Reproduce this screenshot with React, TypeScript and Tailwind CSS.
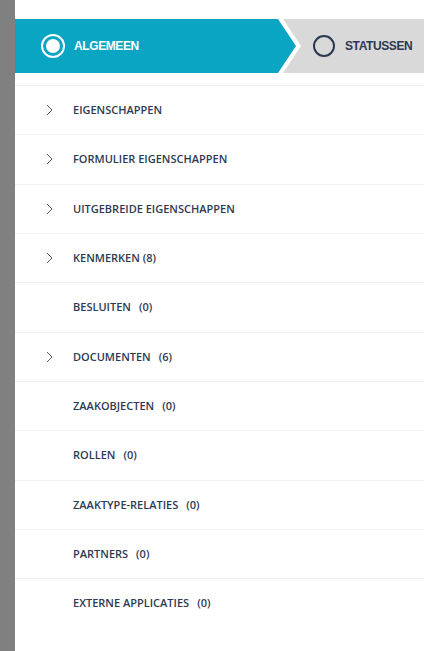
const items = [
  { label: 'Eigenschappen', chevron: true },
  { label: 'Formulier eigenschappen', chevron: true },
  { label: 'Uitgebreide eigenschappen', chevron: true },
  { label: 'Kenmerken (8)', chevron: true },
  { label: 'Besluiten', count: 0 },
  { label: 'Documenten', count: 6, chevron: true },
  { label: 'Zaakobjecten', count: 0 },
  { label: 'Rollen', count: 0 },
  { label: 'Zaaktype-relaties', count: 0 },
  { label: 'Partners', count: 0 },
  { label: 'Externe applicaties', count: 0 },
];

const Chevron = () => (
  <svg width="7" height="12" viewBox="0 0 7 12" fill="none" className="absolute left-[31px] top-1/2 -translate-y-1/2">
    <path d="M1 1 L6 6 L1 11" stroke="#555a60" strokeWidth="1" />
  </svg>
);

export default function App() {
  return (
    <div className="flex min-h-[651px] bg-white font-['Open_Sans',sans-serif]">
      <div className="w-[15px] shrink-0 bg-[#808080]" />
      <div className="flex-1 pt-[19px]">
        {/* Step tabs */}
        <div className="flex h-[54px] font-['Liberation_Sans',Arial,sans-serif] text-[12px] font-bold uppercase tracking-[-0.4px]">
          <div className="relative z-10 flex w-[281px] shrink-0 items-center gap-[9px] bg-[#0ba5c4] pl-[26px] text-white [clip-path:polygon(0_0,calc(100%-18px)_0,100%_50%,calc(100%-18px)_100%,0_100%)]">
            <span className="flex h-6 w-6 items-center justify-center rounded-full border-2 border-white">
              <span className="h-[14px] w-[14px] rounded-full bg-white" />
            </span>
            Algemeen
          </div>
          <div className="-ml-[13px] flex flex-1 items-center gap-[10px] bg-[#d9d9d9] pl-[30px] text-[#2b3850] [clip-path:polygon(0_0,100%_0,100%_100%,0_100%,18px_50%)]">
            <span className="h-[22px] w-[22px] rounded-full border-2 border-[#2b3850]" />
            Statussen
          </div>
        </div>

        {/* Sections */}
        <ul className="mt-[12px]">
          {items.map((item) => (
            <li
              key={item.label}
              className="relative flex h-[49.33px] items-center border-t border-[#f0f0f0] pl-[58px] text-[11px] font-semibold uppercase text-[#2d3a52] first:border-t"
            >
              {item.chevron && <Chevron />}
              <span>{item.label}</span>
              {item.count !== undefined && <span className="ml-[8px]">({item.count})</span>}
            </li>
          ))}
        </ul>
      </div>
    </div>
  );
}
